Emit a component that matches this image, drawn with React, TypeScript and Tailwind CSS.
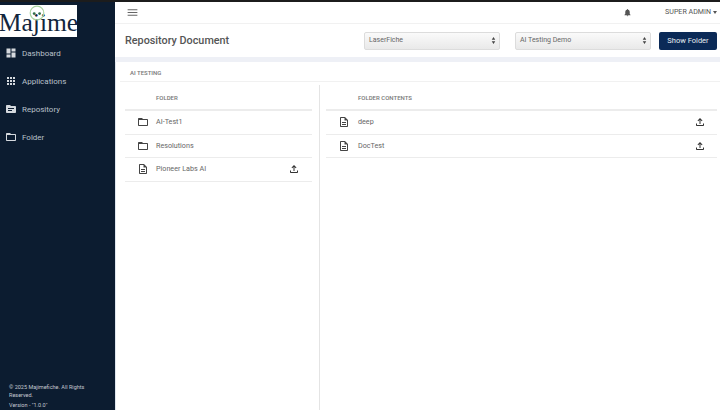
import type { ReactNode } from "react"

const paths = {
  dashboard: "M3 13h8V3H3v10zm0 8h8v-6H3v6zm10 0h8V11h-8v10zm0-18v6h8V3h-8z",
  apps: "M4 8h4V4H4v4zm6 12h4v-4h-4v4zm-6 0h4v-4H4v4zm0-6h4v-4H4v4zm6 0h4v-4h-4v4zm6-10v4h4V4h-4zm-6 4h4V4h-4v4zm6 6h4v-4h-4v4zm0 6h4v-4h-4v4z",
  topic: "M20 6h-8l-2-2H4c-1.1 0-1.99.9-1.99 2L2 18c0 1.1.9 2 2 2h16c1.1 0 2-.9 2-2V8c0-1.1-.9-2-2-2zm-6 10H6v-2h8v2zm4-4H6v-2h12v2z",
  folder: "M20 6h-8l-2-2H4c-1.1 0-1.99.9-1.99 2L2 18c0 1.1.9 2 2 2h16c1.1 0 2-.9 2-2V8c0-1.1-.9-2-2-2zm0 12H4V8h16v10z",
  doc: "M8 16h8v2H8zm0-4h8v2H8zm6-10H6c-1.1 0-2 .9-2 2v16c0 1.1.89 2 1.99 2H18c1.1 0 2-.9 2-2V8l-6-6zm4 18H6V4h7v5h5v11z",
  upload: "M18 15v3H6v-3H4v3c0 1.1.9 2 2 2h12c1.1 0 2-.9 2-2v-3h-2zM7 9l1.41 1.41L11 7.83V16h2V7.83l2.59 2.58L17 9l-5-5-5 5z",
  bell: "M12 22c1.1 0 2-.9 2-2h-4c0 1.1.89 2 2 2zm6-6v-5c0-3.07-1.64-5.64-4.5-6.32V4c0-.83-.67-1.5-1.5-1.5s-1.5.67-1.5 1.5v.68C7.63 5.36 6 7.92 6 11v5l-2 2v1h16v-1l-2-2z",
  menu: "M3 18h18v-2H3v2zm0-5h18v-2H3v2zm0-7v2h18V6H3z",
}

function Icon({ d, className }: { d: string; className: string }) {
  return (
    <svg viewBox="0 0 24 24" fill="currentColor" className={className}>
      <path d={d} />
    </svg>
  )
}

function NavItem({ icon, label }: { icon: string; label: string }) {
  return (
    <div className="flex h-7 items-center gap-[5px] pl-[5px] text-[#b9c0c9]">
      <Icon d={icon} className="h-[12px] w-[12px] shrink-0 text-[#d5d9de]" />
      <span className="pt-[1px] text-[8px] leading-none">{label}</span>
    </div>
  )
}

function SelectBox({ label }: { label: string }) {
  return (
    <div className="flex h-[18px] w-[136px] items-center justify-between rounded-[2px] border border-[#dcdcdc] bg-gradient-to-b from-[#fafafa] to-[#e9e9e9] pl-1 pr-[3px] text-[7px] text-[#666]">
      <span>{label}</span>
      <svg viewBox="0 0 6 10" className="h-[7px] w-[5px] text-[#444]" fill="currentColor">
        <path d="M3 0l2.5 4h-5zM3 10L.5 6h5z" />
      </svg>
    </div>
  )
}

function Row({ icon, label, upload, labelClass, uploadClass }: { icon: string; label: string; upload?: boolean; labelClass: string; uploadClass?: string }) {
  return (
    <div className="flex h-[23.5px] items-center border-b border-[#ececec] pl-3 text-[#666]">
      <Icon d={icon} className="h-[12px] w-[12px] shrink-0 text-[#444]" />
      <span className={`pt-[1px] text-[7.2px] ${labelClass}`}>{label}</span>
      {upload ? <Icon d={paths.upload} className={`ml-auto h-[12px] w-[12px] text-[#333] ${uploadClass}`} /> : null}
    </div>
  )
}

function Column({ title, className, titleClass, children }: { title: string; className: string; titleClass: string; children: ReactNode }) {
  return (
    <div className={className}>
      <div className={`flex h-[26px] items-center border-b-2 border-[#ececec] text-[6px] font-medium text-[#777] ${titleClass}`}>
        {title}
      </div>
      {children}
    </div>
  )
}

export default function App() {
  return (
    <div className="flex h-[410px] w-[720px] flex-col overflow-hidden bg-white font-['Roboto',sans-serif]">
      <div className="h-[2px] shrink-0 bg-[#1c1c1c]" />
      <div className="flex min-h-0 flex-1">
        <aside className="flex w-[115px] shrink-0 flex-col bg-[#0c1c30]">
          <div className="relative mt-[3px] flex h-[32px] w-[77px] items-end justify-center bg-white pb-[1px]">
            <span className="font-['Liberation_Serif',serif] text-[25.5px] leading-[26px] text-[#12263d]">Majime</span>
            <svg viewBox="0 0 16 16" className="absolute left-[29px] top-0 h-[16px] w-[16px]">
              <circle cx="8" cy="8" r="6.8" fill="none" stroke="#a9d3a0" strokeWidth="1.2" />
              <circle cx="5.2" cy="8.6" r="1.4" fill="#2f6d4a" />
              <circle cx="10.6" cy="8.6" r="1.4" fill="#2f6d4a" />
            </svg>
          </div>
          <nav className="mt-[2px] flex flex-col">
            <NavItem icon={paths.dashboard} label="Dashboard" />
            <NavItem icon={paths.apps} label="Applications" />
            <NavItem icon={paths.topic} label="Repository" />
            <NavItem icon={paths.folder} label="Folder" />
          </nav>
          <div className="mt-auto px-[9px] pb-[1px] text-[5.5px] leading-[8.5px] text-[#c5cad1]">
            <p>© 2025 Majimefiche. All Rights Reserved.</p>
            <p className="mt-[1px]">Version - "1.0.0"</p>
          </div>
        </aside>
        <main className="flex min-w-0 flex-1 flex-col">
          <header className="flex h-[22px] shrink-0 items-center justify-between border-b border-[#f1f1f1] pl-[11px] pr-[3px]">
            <Icon d={paths.menu} className="h-[13px] w-[13px] text-[#666]" />
            <div className="flex items-center gap-[33px] text-[7.1px] text-[#555]">
              <Icon d={paths.bell} className="h-[9px] w-[9px] text-[#555]" />
              <div className="flex items-center gap-[2px]">
                SUPER ADMIN
                <span className="mt-[1px] h-0 w-0 border-x-[2.5px] border-t-[3px] border-x-transparent border-t-[#555]" />
              </div>
            </div>
          </header>
          <div className="flex h-[33px] shrink-0 items-center pl-[10px] pr-[3px]">
            <h1 className="pt-[1px] text-[10.8px] font-medium text-[#555]">Repository Document</h1>
            <div className="ml-auto flex items-center">
              <SelectBox label="LaserFiche" />
              <div className="ml-[15px]">
                <SelectBox label="AI Testing Demo" />
              </div>
              <button className="ml-2 flex h-[18px] w-[58px] items-center justify-center rounded-[2px] bg-[#0b2a57] text-[7.5px] text-[#e8ecf1]">
                Show Folder
              </button>
            </div>
          </div>
          <div className="h-[5px] shrink-0 bg-[#eef0f6]" />
          <div className="flex min-h-0 flex-1 flex-col border-l border-[#dfe6ee]">
            <div className="ml-[4px] flex h-[20px] shrink-0 items-center border-b border-[#f1f1f1] pl-[10px] pt-[1px] text-[6px] font-medium text-[#777]">
              AI TESTING
            </div>
            <div className="flex min-h-0 flex-1 pt-[3px]">
              <Column title="FOLDER" titleClass="pl-[31px]" className="ml-[9px] w-[187px] shrink-0">
                <Row icon={paths.folder} label="AI-Test1" labelClass="ml-[7px]" />
                <Row icon={paths.folder} label="Resolutions" labelClass="ml-[7px]" />
                <Row icon={paths.doc} label="Pioneer Labs AI" labelClass="ml-[7px]" upload uploadClass="mr-[12px]" />
              </Column>
              <div className="ml-[7px] w-px bg-[#e4e4e4]" />
              <Column title="FOLDER CONTENTS" titleClass="pl-[32px]" className="ml-[6px] w-[391px] shrink-0">
                <Row icon={paths.doc} label="deep" labelClass="ml-[8px]" upload uploadClass="mr-[11px]" />
                <Row icon={paths.doc} label="DocTest" labelClass="ml-[8px]" upload uploadClass="mr-[11px]" />
              </Column>
            </div>
          </div>
        </main>
      </div>
    </div>
  )
}
